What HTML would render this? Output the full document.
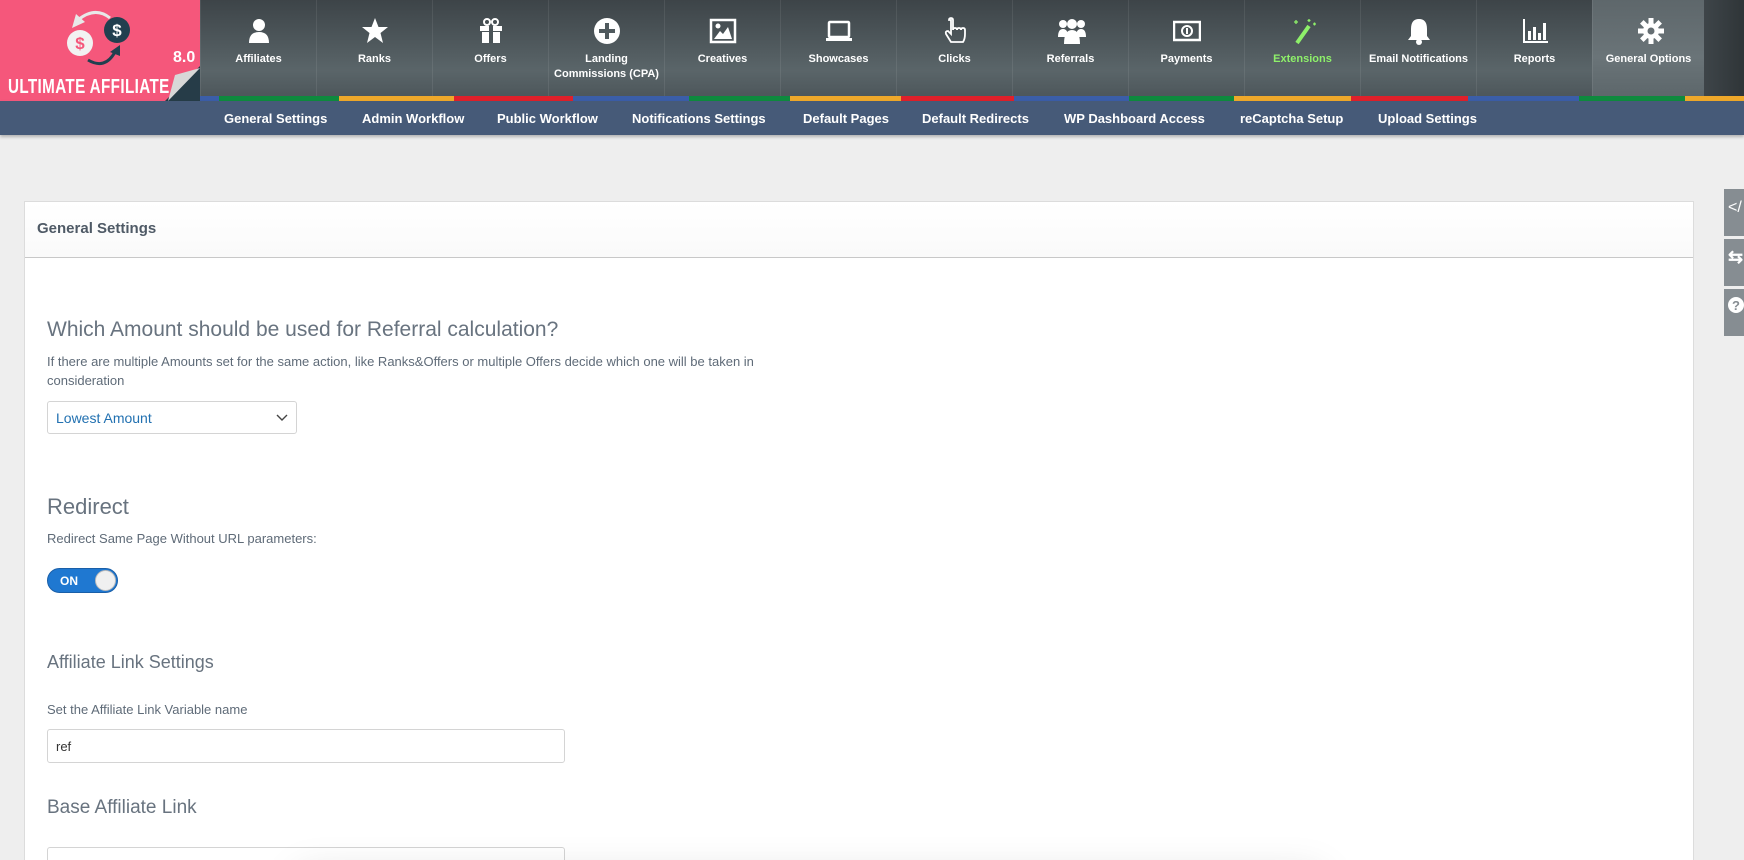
<!DOCTYPE html>
<html><head><meta charset="utf-8"><style>
*{box-sizing:border-box;margin:0;padding:0}
html,body{width:1744px;height:860px;overflow:hidden}
body{background:#eeeeee;font-family:"Liberation Sans",Arial,sans-serif}
#wrap{position:relative;width:1744px;height:860px;overflow:hidden}
#top{position:absolute;left:0;top:0;width:1744px;height:101px;background:linear-gradient(#3d4448,#5a6569 70%,#4b5458)}
#right{position:absolute;left:1704px;top:0;width:40px;height:96px;background:linear-gradient(90deg,#3e4549,#2f3538)}
.nav{position:absolute;top:0;height:96px;width:116px;border-left:1px solid rgba(255,255,255,0.08);color:#fff;font-weight:bold;font-size:11px;text-align:center}
.nav svg{position:absolute;left:44px;top:17px}
.nav span{position:absolute;left:0;right:0;top:52px;line-height:15px}
.nav.act{background:linear-gradient(#5e676b,#6a7478 60%,#5d676b)}
.stripe{position:absolute;top:96px;height:5px}
#sub{position:absolute;left:0;top:101px;width:1744px;height:34px;background:#465a78;box-shadow:0 2px 3px rgba(0,0,0,0.25)}
#sub a{position:absolute;top:10px;color:#fff;font-weight:bold;font-size:13px;text-decoration:none;white-space:nowrap}
#logo{position:absolute;left:0;top:0;width:200px;height:101px;background:#f5577b;overflow:hidden}
#card{position:absolute;left:24px;top:201px;width:1670px;height:720px;background:#fff;border:1px solid #dcdcdc}
#card .hd{height:56px;border-bottom:1px solid #c8c8c8;background:linear-gradient(#fff,#fafafa);padding:18px 12px;font-weight:bold;font-size:15px;color:#4f5a66}
.t{position:absolute;color:#68737f;white-space:nowrap}
.tabs{position:absolute;left:1724px;width:20px;height:47px;background:#868d92;color:#fff}
</style></head><body><div id="wrap">
<div id="top"></div>
<div id="right"></div>

<div id="logo">
<svg width="200" height="101" viewBox="0 0 200 101" style="position:absolute;left:0;top:0">
<path d="M110 18 Q95 6 78 20" fill="none" stroke="#e8e8e8" stroke-width="3"/>
<polygon points="72,28 76,14 85,22" fill="#e8e8e8"/>
<circle cx="80" cy="43" r="13" fill="#f2f2f2"/>
<text x="80" y="49" font-size="17" font-weight="bold" fill="#f5577b" text-anchor="middle" font-family="Liberation Sans">$</text>
<circle cx="117" cy="30" r="13" fill="#213f4f"/>
<text x="117" y="36" font-size="17" font-weight="bold" fill="#fff" text-anchor="middle" font-family="Liberation Sans">$</text>
<path d="M88 60 Q105 70 115 52" fill="none" stroke="#213f4f" stroke-width="3"/>
<polygon points="110,52 120,45 120,56" fill="#213f4f"/>
<text x="173" y="62" font-size="16" font-weight="bold" fill="#fff" font-family="Liberation Sans">8.0</text>
</svg>
<div style="position:absolute;left:8px;top:76px;font-size:20px;font-weight:bold;color:#fff;white-space:nowrap;transform:scaleX(0.76);transform-origin:0 0;letter-spacing:0.5px">ULTIMATE AFFILIATE</div>
<svg width="200" height="101" viewBox="0 0 200 101" style="position:absolute;left:0;top:0">
<polygon points="200,66 200,101 165,101" fill="#263c48"/>
<polygon points="168,101 200,68 175,75" fill="#d8d8d8"/>
</svg>
</div>

<div class="nav" style="left:200px"><svg width="28" height="28" viewBox="0 0 28 28"><circle cx="14" cy="8" r="6" fill="#fff"/><path d="M4 26 Q4 15 14 15 Q24 15 24 26Z" fill="#fff"/></svg><span>Affiliates</span></div>
<div class="nav" style="left:316px"><svg width="28" height="28" viewBox="0 0 28 28"><polygon points="14,1 17.5,10 27,10 19.5,16 22,26 14,20 6,26 8.5,16 1,10 10.5,10" fill="#fff"/></svg><span>Ranks</span></div>
<div class="nav" style="left:432px"><svg width="28" height="28" viewBox="0 0 28 28"><rect x="3" y="9" width="22" height="5" fill="#fff"/><rect x="5" y="15" width="18" height="11" fill="#fff"/><rect x="12" y="9" width="4" height="17" fill="#4b5458"/><circle cx="10" cy="5" r="3" fill="none" stroke="#fff" stroke-width="2"/><circle cx="18" cy="5" r="3" fill="none" stroke="#fff" stroke-width="2"/></svg><span>Offers</span></div>
<div class="nav" style="left:548px"><svg width="28" height="28" viewBox="0 0 28 28"><circle cx="14" cy="14" r="13" fill="#fff"/><rect x="12" y="6" width="4" height="16" fill="#505a5e"/><rect x="6" y="12" width="16" height="4" fill="#505a5e"/></svg><span>Landing<br>Commissions (CPA)</span></div>
<div class="nav" style="left:664px"><svg width="28" height="28" viewBox="0 0 28 28"><rect x="2" y="3" width="24" height="22" fill="none" stroke="#fff" stroke-width="2.5"/><circle cx="9" cy="9" r="2.5" fill="#fff"/><polygon points="5,22 11,14 14,17 19,10 23,22" fill="#fff"/></svg><span>Creatives</span></div>
<div class="nav" style="left:780px"><svg width="28" height="28" viewBox="0 0 28 28"><rect x="4" y="5" width="20" height="15" rx="1" fill="none" stroke="#fff" stroke-width="2.5"/><rect x="1" y="21" width="26" height="3" fill="#fff"/></svg><span>Showcases</span></div>
<div class="nav" style="left:896px"><svg width="28" height="28" viewBox="0 0 28 28"><path d="M10 3 v14 l-3-3 q-3 0-2 3 l5 8 h12 q2-3 2-8 v-4 q0-2-2-2 q-2 0-2 2 q0-2-2-2 q-2 0-2 2 q0-2-2-2 q-2 0-2 2 V3 q0-2-2-2 q-2 0-2 2z" fill="none" stroke="#fff" stroke-width="1.8"/></svg><span>Clicks</span></div>
<div class="nav" style="left:1012px"><svg width="30" height="28" viewBox="0 0 30 28"><circle cx="15" cy="7" r="5" fill="#fff"/><circle cx="6" cy="7" r="4" fill="#fff"/><circle cx="24" cy="7" r="4" fill="#fff"/><path d="M1 20 q0-8 5-8 q5 0 5 8z M19 20 q0-8 5-8 q5 0 5 8z" fill="#fff"/><path d="M7 27 q0-14 8-14 q8 0 8 14z" fill="#fff"/></svg><span>Referrals</span></div>
<div class="nav" style="left:1128px"><svg width="28" height="28" viewBox="0 0 28 28"><rect x="1" y="5" width="26" height="18" fill="none" stroke="#fff" stroke-width="2.5"/><circle cx="14" cy="14" r="5" fill="none" stroke="#fff" stroke-width="2"/><rect x="13" y="11" width="2" height="6" fill="#fff"/></svg><span>Payments</span></div>
<div class="nav" style="left:1244px;color:#8ef06a"><svg width="28" height="28" viewBox="0 0 28 28"><path d="M8 26 L20 9" stroke="#8ef06a" stroke-width="4"/><path d="M5 5 h4 M7 3 v4 M20 2 v3 M18.5 3.5 h3 M24 7 h3 M25.5 5.5 v3" stroke="#8ef06a" stroke-width="1.3"/></svg><span>Extensions</span></div>
<div class="nav" style="left:1360px"><svg width="28" height="28" viewBox="0 0 28 28"><path d="M14 2 q8 0 8 10 v7 l3 4 H3 l3-4 v-7 q0-10 8-10z" fill="#fff"/><circle cx="14" cy="25" r="3" fill="#fff"/></svg><span>Email Notifications</span></div>
<div class="nav" style="left:1476px"><svg width="28" height="28" viewBox="0 0 28 28"><path d="M3 2 v23 h24" fill="none" stroke="#fff" stroke-width="2"/><rect x="7" y="14" width="3" height="9" fill="#fff"/><rect x="12" y="10" width="3" height="13" fill="#fff"/><rect x="17" y="16" width="3" height="7" fill="#fff"/><rect x="22" y="6" width="3" height="17" fill="#fff"/></svg><span>Reports</span></div>
<div class="nav act" style="left:1592px;width:112px"><svg width="28" height="28" viewBox="0 0 28 28"><g fill="#fff"><circle cx="14" cy="14" r="8"/><rect x="11.5" y="1" width="5" height="26"/><rect x="1" y="11.5" width="26" height="5"/><rect x="11.5" y="1" width="5" height="26" transform="rotate(45 14 14)"/><rect x="11.5" y="1" width="5" height="26" transform="rotate(-45 14 14)"/></g><circle cx="14" cy="14" r="3.5" fill="#666f73"/></svg><span>General Options</span></div>

<div class="stripe" style="left:200px;width:19px;background:#3b5ea8"></div>
<div class="stripe" style="left:219px;width:120px;background:#0e8a3e"></div>
<div class="stripe" style="left:339px;width:115px;background:#efa82a"></div>
<div class="stripe" style="left:454px;width:119px;background:#e0202a"></div>
<div class="stripe" style="left:573px;width:116px;background:#3b5ea8"></div>
<div class="stripe" style="left:689px;width:101px;background:#0e8a3e"></div>
<div class="stripe" style="left:790px;width:111px;background:#efa82a"></div>
<div class="stripe" style="left:901px;width:113px;background:#e0202a"></div>
<div class="stripe" style="left:1014px;width:115px;background:#3b5ea8"></div>
<div class="stripe" style="left:1129px;width:105px;background:#0e8a3e"></div>
<div class="stripe" style="left:1234px;width:117px;background:#efa82a"></div>
<div class="stripe" style="left:1351px;width:117px;background:#e0202a"></div>
<div class="stripe" style="left:1468px;width:111px;background:#3b5ea8"></div>
<div class="stripe" style="left:1579px;width:106px;background:#0e8a3e"></div>
<div class="stripe" style="left:1685px;width:59px;background:#efa82a"></div>

<div id="sub">
<a style="left:224px">General Settings</a>
<a style="left:362px">Admin Workflow</a>
<a style="left:497px">Public Workflow</a>
<a style="left:632px">Notifications Settings</a>
<a style="left:803px">Default Pages</a>
<a style="left:922px">Default Redirects</a>
<a style="left:1064px">WP Dashboard Access</a>
<a style="left:1240px">reCaptcha Setup</a>
<a style="left:1378px">Upload Settings</a>
</div>

<div id="card"><div class="hd">General Settings</div></div>

<div class="t" style="left:47px;top:318px;font-size:21px">Which Amount should be used for Referral calculation?</div>
<div class="t" style="left:47px;top:352px;font-size:13px;line-height:19px;color:#5f6b78">If there are multiple Amounts set for the same action, like Ranks&amp;Offers or multiple Offers decide which one will be taken in<br>consideration</div>
<div style="position:absolute;left:47px;top:401px;width:250px;height:33px;border:1px solid #d4d4d4;border-radius:3px;background:#fff">
<span style="position:absolute;left:8px;top:8px;font-size:14px;color:#2271b1">Lowest Amount</span>
<svg style="position:absolute;right:8px;top:12px" width="12" height="8" viewBox="0 0 12 8"><path d="M1 1 L6 6 L11 1" fill="none" stroke="#444" stroke-width="1.4"/></svg>
</div>

<div class="t" style="left:47px;top:494px;font-size:22px">Redirect</div>
<div class="t" style="left:47px;top:531px;font-size:13px;color:#5f6b78">Redirect Same Page Without URL parameters:</div>
<div style="position:absolute;left:47px;top:568px;width:71px;height:25px;border-radius:13px;background:#1f78d1;border:1px solid #1a5fa8">
<span style="position:absolute;left:12px;top:5px;color:#fff;font-weight:bold;font-size:12px">ON</span>
<div style="position:absolute;right:1px;top:1px;width:21px;height:21px;border-radius:50%;background:#f0f0f0;border:1px solid #bbb"></div>
</div>

<div class="t" style="left:47px;top:652px;font-size:18px">Affiliate Link Settings</div>
<div class="t" style="left:47px;top:702px;font-size:13px;color:#5f6b78">Set the Affiliate Link Variable name</div>
<div style="position:absolute;left:47px;top:729px;width:518px;height:34px;border:1px solid #d4d4d4;border-radius:3px;background:#fff"><span style="position:absolute;left:8px;top:9px;font-size:13px;color:#333">ref</span></div>

<div class="t" style="left:47px;top:797px;font-size:19px">Base Affiliate Link</div>
<div style="position:absolute;left:47px;top:847px;width:518px;height:34px;border:1px solid #d4d4d4;border-radius:3px;background:#fff"></div>
<div style="position:absolute;left:310px;top:885px;width:1000px;height:40px;background:#fff;box-shadow:0 0 40px 12px rgba(0,0,0,0.13)"></div>

<div class="tabs" style="top:189px"><span style="position:absolute;left:4px;top:10px;font-size:16px">&lt;/</span></div>
<div class="tabs" style="top:239px"><span style="position:absolute;left:4px;top:8px;font-size:18px;font-weight:bold">⇆</span></div>
<div class="tabs" style="top:289px"><svg style="position:absolute;left:4px;top:8px" width="16" height="16" viewBox="0 0 16 16"><circle cx="8" cy="8" r="8" fill="#fff"/><text x="8" y="13" font-size="13" font-weight="bold" fill="#868d92" text-anchor="middle" font-family="Liberation Sans">?</text></svg></div>
</div></body></html>
